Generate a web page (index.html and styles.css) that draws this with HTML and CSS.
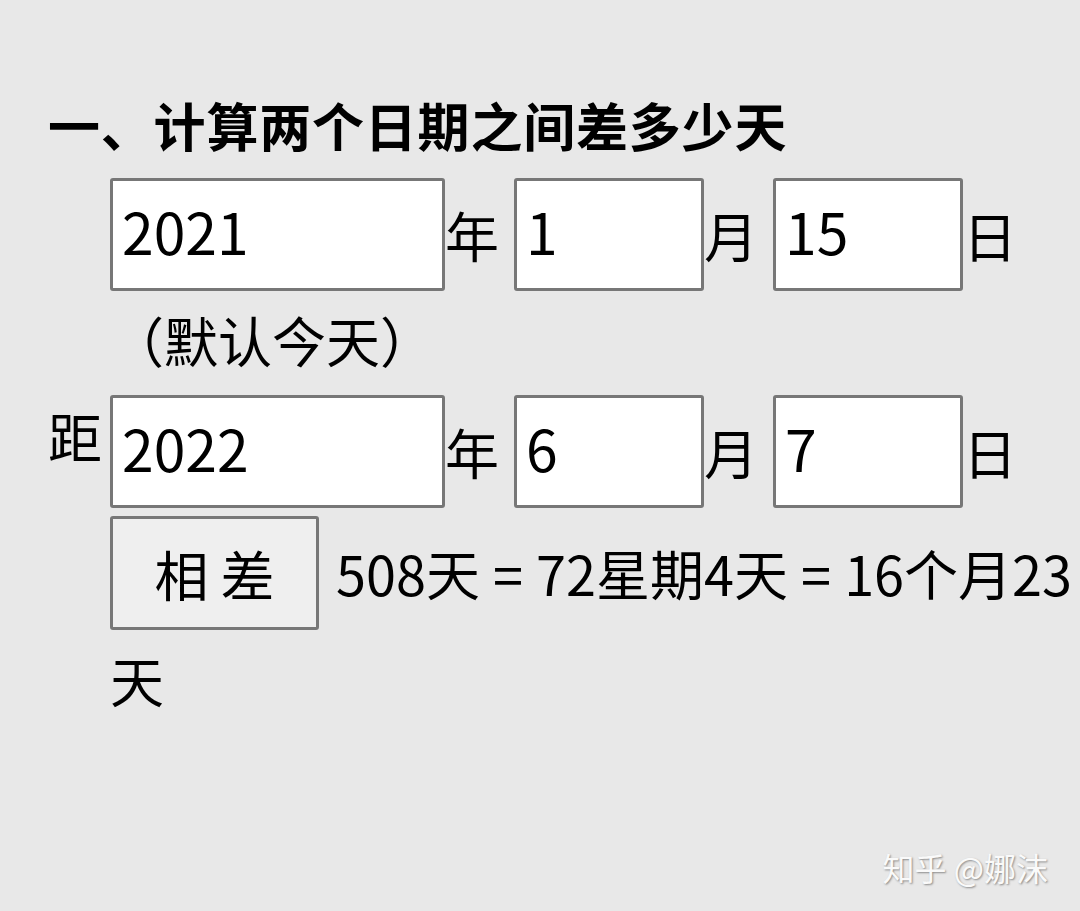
FILE: index.html
```html
<!DOCTYPE html>
<html lang="zh">
<head>
<meta charset="utf-8">
<title>计算两个日期之间差多少天</title>
<link rel="stylesheet" href="styles.css">
</head>
<body>
<main class="page">
  <h1 class="title">一、计算两个日期之间差多少天</h1>
  <div class="form">
    <div class="lead"></div>
    <div class="row">
      <input class="field field-year" type="text" value="2021">
      <span class="unit">年</span>
      <input class="field field-small" type="text" value="1">
      <span class="unit">月</span>
      <input class="field field-small" type="text" value="15">
      <span class="unit">日</span>
    </div>

    <div class="lead"></div>
    <div class="note">（默认今天）</div>

    <div class="lead lead-text">距</div>
    <div class="row row-second">
      <input class="field field-year" type="text" value="2022">
      <span class="unit">年</span>
      <input class="field field-small" type="text" value="6">
      <span class="unit">月</span>
      <input class="field field-small" type="text" value="7">
      <span class="unit">日</span>
    </div>

    <div class="lead"></div>
    <div class="row row-result">
      <button class="calc" type="button">相 差</button>
      <span class="result">508天 = 72星期4天 = 16个月23</span>
    </div>

    <div class="lead"></div>
    <div class="tail">天</div>
  </div>
</main>
<div class="watermark">知乎 @娜沫</div>
</body>
</html>
```

FILE: styles.css
```css
html, body {
  margin: 0;
  padding: 0;
}

body {
  background: #e8e8e8;
  width: 1080px;
  height: 911px;
  overflow: hidden;
  position: relative;
  font-family: "Noto Sans CJK SC", "Noto Sans", sans-serif;
  color: #000;
}

.page {
  padding: 99px 0 0 48px;
}

.title {
  margin: 0;
  font-size: 52px;
  line-height: 52px;
  font-weight: 700;
  letter-spacing: 0.8px;
}

.form {
  margin-top: 27px;
  display: grid;
  grid-template-columns: 62px 1fr;
}

.lead {
  font-size: 54px;
  line-height: 54px;
}

.lead-text {
  display: flex;
  align-items: center;
  padding-bottom: 4px;
}

.row {
  display: flex;
  align-items: center;
  white-space: nowrap;
}

.field {
  box-sizing: border-box;
  height: 113px;
  margin: 0;
  padding: 0 0 10px 9px;
  border: 3px solid #777;
  border-radius: 3px;
  background: #fff;
  font-family: "Noto Sans CJK SC", "Noto Sans", sans-serif;
  font-size: 57px;
  color: #000;
  outline: none;
}

.field-year {
  width: 335px;
}

.field-small {
  width: 190px;
}

.unit {
  font-size: 54px;
  line-height: 54px;
  margin-right: 15px;
}

.note {
  margin-top: 22px;
  font-size: 54px;
  line-height: 54px;
}

.row-second {
  margin-top: 28px;
}

.row-result {
  margin-top: 8px;
}

.calc {
  box-sizing: border-box;
  width: 209px;
  height: 114px;
  margin: 0 17px 0 0;
  padding: 0;
  border: 3px solid #777;
  border-radius: 3px;
  background: #efefef;
  font-family: "Noto Sans CJK SC", "Noto Sans", sans-serif;
  font-size: 54px;
  color: #000;
}

.result {
  font-size: 54px;
  line-height: 54px;
  word-spacing: 1px;
}

.tail {
  margin-top: 23px;
  font-size: 54px;
  line-height: 54px;
}

.watermark {
  position: absolute;
  right: 32px;
  bottom: 28px;
  font-size: 32px;
  line-height: 32px;
  color: #fafafa;
  text-shadow: 1px 1px 2px #8a8a8a;
}
```
